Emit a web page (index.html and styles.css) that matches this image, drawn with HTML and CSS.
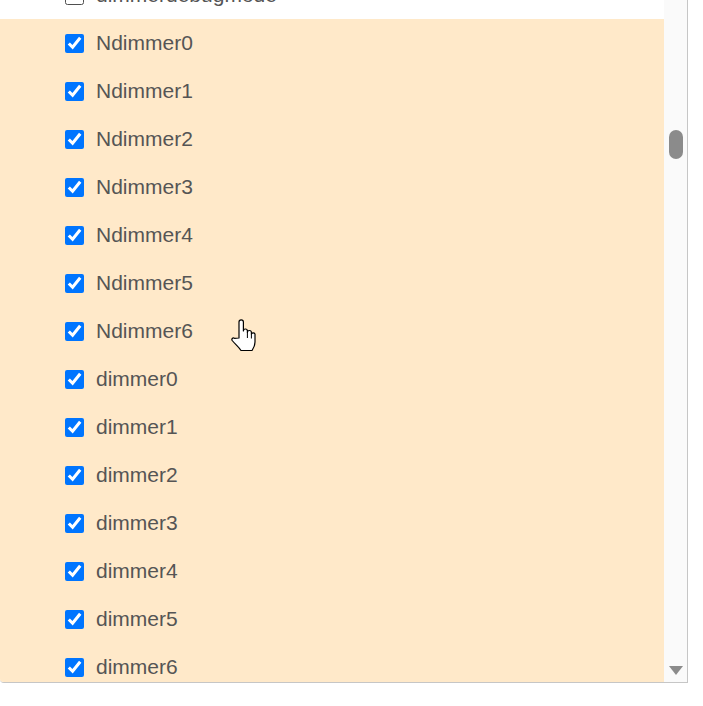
FILE: index.html
```html
<!DOCTYPE html>
<html>
<head>
<meta charset="utf-8">
<link rel="stylesheet" href="styles.css">
</head>
<body>
<div class="panel">
  <div class="list">
    <label class="row"><input type="checkbox" class="cb"><span>dimmerdebugmode</span></label>
    <div class="group">
      <label class="row"><input type="checkbox" class="cb" checked><span>Ndimmer0</span></label>
      <label class="row"><input type="checkbox" class="cb" checked><span>Ndimmer1</span></label>
      <label class="row"><input type="checkbox" class="cb" checked><span>Ndimmer2</span></label>
      <label class="row"><input type="checkbox" class="cb" checked><span>Ndimmer3</span></label>
      <label class="row"><input type="checkbox" class="cb" checked><span>Ndimmer4</span></label>
      <label class="row"><input type="checkbox" class="cb" checked><span>Ndimmer5</span></label>
      <label class="row"><input type="checkbox" class="cb" checked><span>Ndimmer6</span></label>
      <label class="row"><input type="checkbox" class="cb" checked><span>dimmer0</span></label>
      <label class="row"><input type="checkbox" class="cb" checked><span>dimmer1</span></label>
      <label class="row"><input type="checkbox" class="cb" checked><span>dimmer2</span></label>
      <label class="row"><input type="checkbox" class="cb" checked><span>dimmer3</span></label>
      <label class="row"><input type="checkbox" class="cb" checked><span>dimmer4</span></label>
      <label class="row"><input type="checkbox" class="cb" checked><span>dimmer5</span></label>
      <label class="row"><input type="checkbox" class="cb" checked><span>dimmer6</span></label>
    </div>
  </div>
  <div class="scrollbar">
    <div class="thumb"></div>
    <div class="arrow"></div>
  </div>
  <svg class="cursor" width="26" height="34" viewBox="0 0 26 34">
    <path d="M8,19 L8,3 a2.2,2.2 0 0 1 4.4,0 L12.4,12 a2,2 0 0 1 4,0 v1.5 a2,2 0 0 1 4,0 v1.5 a2,2 0 0 1 3.6,0 L24,23 c0,4 -1.5,6 -3,8.5 L10,31.5 C8,28 4,25 1.2,21.5 c-1,-1.5 0.5,-3.2 2.2,-2.2 Z" fill="#fff" stroke="#000" stroke-width="1.2" stroke-linejoin="round"/>
    <path d="M16.4,13.5 v5.5 M20.4,15 v4.5" stroke="#000" stroke-width="1" fill="none"/>
  </svg>
</div>
</body>
</html>
```

FILE: styles.css
```css
html, body {
  margin: 0;
  padding: 0;
  background: #fff;
}

.panel {
  position: relative;
  width: 687px;
  height: 682px;
  border-right: 1px solid #c6c6c6;
  border-bottom: 1px solid #c6c6c6;
  border-bottom-left-radius: 4px;
  overflow: hidden;
  display: flex;
}

.list {
  flex: 1;
  margin-top: -29px;
  font-family: "Liberation Sans", Arial, sans-serif;
  font-size: 21px;
  color: #555;
}

.group {
  background: #ffe9c9;
  height: 800px;
}

.row {
  display: flex;
  align-items: center;
  height: 48px;
  padding-left: 65px;
  gap: 12px;
}

.cb {
  width: 19px;
  height: 19px;
  margin: 0;
  accent-color: #0075ff;
}

.scrollbar {
  width: 23px;
  background: #fafafa;
  display: flex;
  flex-direction: column;
  align-items: center;
}

.thumb {
  width: 14px;
  height: 29px;
  margin-top: 130px;
  border-radius: 7px;
  background: #8b8b8b;
}

.arrow {
  margin-top: auto;
  margin-bottom: 7px;
  width: 0;
  height: 0;
  border-left: 7px solid transparent;
  border-right: 7px solid transparent;
  border-top: 9px solid #8b8b8b;
}

.cursor {
  position: absolute;
  left: 231px;
  top: 319px;
}
```
